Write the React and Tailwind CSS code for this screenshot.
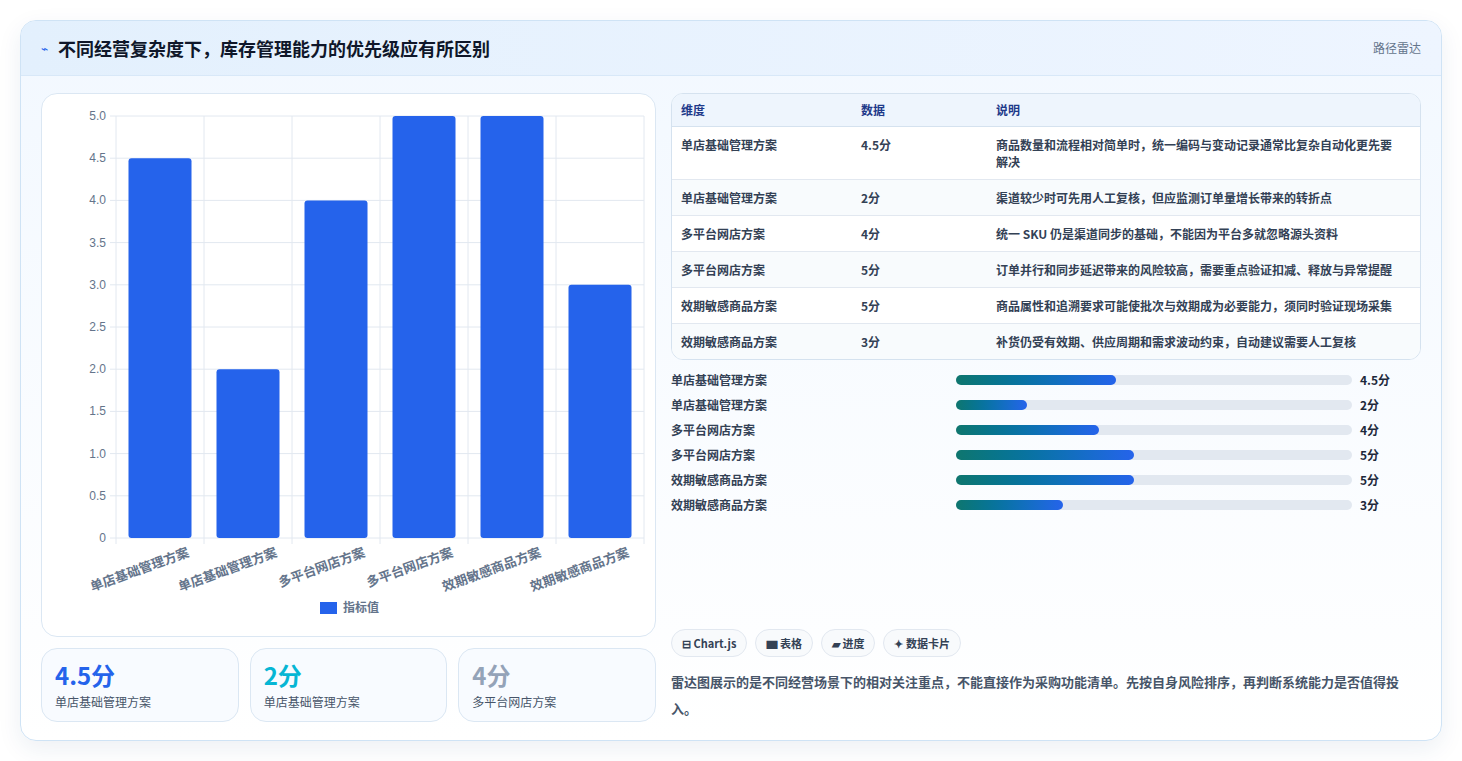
import React from 'react';

const rows = [
  { name: '单店基础管理方案', v: 4.5, note: '商品数量和流程相对简单时，统一编码与变动记录通常比复杂自动化更先要解决' },
  { name: '单店基础管理方案', v: 2, note: '渠道较少时可先用人工复核，但应监测订单量增长带来的转折点' },
  { name: '多平台网店方案', v: 4, note: '统一 SKU 仍是渠道同步的基础，不能因为平台多就忽略源头资料' },
  { name: '多平台网店方案', v: 5, note: '订单并行和同步延迟带来的风险较高，需要重点验证扣减、释放与异常提醒' },
  { name: '效期敏感商品方案', v: 5, note: '商品属性和追溯要求可能使批次与效期成为必要能力，须同时验证现场采集' },
  { name: '效期敏感商品方案', v: 3, note: '补货仍受有效期、供应周期和需求波动约束，自动建议需要人工复核' },
];

function BarChart() {
  const x0 = 74, x1 = 602, y0 = 22, y1 = 444;
  const step = (x1 - x0) / 6;
  const ticks = [0, 0.5, 1, 1.5, 2, 2.5, 3, 3.5, 4, 4.5, 5];
  const y = (v) => y1 - (v / 5) * (y1 - y0);
  return (
    <svg width="615" height="541" className="block" style={{ fontFamily: '"Liberation Sans","Noto Sans CJK SC",sans-serif' }}>
      {ticks.map((t) => (
        <g key={t}>
          <line x1={x0 - 6} x2={x1} y1={y(t)} y2={y(t)} stroke="#e2e8f0" />
          <text x={x0 - 10} y={y(t) + 4} textAnchor="end" fontSize="12" fill="#64748b">{t === 0 ? '0' : t.toFixed(1)}</text>
        </g>
      ))}
      {[0, 1, 2, 3, 4, 5, 6].map((i) => (
        <line key={i} x1={x0 + i * step} x2={x0 + i * step} y1={y0} y2={y1 + 6} stroke="#e2e8f0" />
      ))}
      {rows.map((r, i) => {
        const cx = x0 + step * i + step / 2;
        return (
          <g key={i}>
            <rect x={cx - 31.5} y={y(r.v)} width="63" height={y1 - y(r.v)} rx="3" fill="#2563eb" />
            <text transform={`translate(${cx + 30},${y1 + 18}) rotate(-20)`} textAnchor="end" fontSize="13" fontWeight="700" fill="#64748b">{r.name}</text>
          </g>
        );
      })}
      <rect x="278" y="508" width="17" height="12" fill="#2563eb" />
      <text x="301" y="518" fontSize="12" fontWeight="700" fill="#64748b">指标值</text>
    </svg>
  );
}

export default function App() {
  return (
    <div className="min-h-screen bg-white pt-5 px-5" style={{ fontFamily: '"Noto Sans CJK SC","Noto Sans",sans-serif' }}>
      <div className="w-[1422px] rounded-2xl border border-[#cfe3f5] overflow-hidden shadow-[0_8px_24px_rgba(30,64,120,0.08)] bg-gradient-to-b from-[#f2f8ff] to-white">
        <div className="h-[55px] flex items-center justify-between px-5 bg-gradient-to-r from-[#e3f0fd] to-[#eef5ff] border-b border-[#d8e8f8]">
          <div className="flex items-center gap-2.5">
            <span className="text-[#2563eb] text-xs">⌁</span>
            <h1 className="text-[18px] font-bold text-[#0f172a]">不同经营复杂度下，库存管理能力的优先级应有所区别</h1>
          </div>
          <span className="text-xs text-[#64748b]">路径雷达</span>
        </div>
        <div className="flex gap-[15px] px-5 pt-[17px] pb-[18px]">
          <div className="w-[615px] flex flex-col gap-[11px]">
            <div className="h-[544px] rounded-2xl border border-[#dbe7f3] bg-white">
              <BarChart />
            </div>
            <div className="grid grid-cols-3 gap-[11px]">
              {[['4.5分', 'text-[#2563eb]', '单店基础管理方案'], ['2分', 'text-[#06b6d4]', '单店基础管理方案'], ['4分', 'text-[#94a3b8]', '多平台网店方案']].map(([v, c, n], i) => (
                <div key={i} className="h-[74px] rounded-2xl border border-[#dbe7f3] bg-[#f8fbff] px-[13px] pt-[10px]">
                  <div className={`text-[24px] font-bold leading-[32px] ${c}`}>{v}</div>
                  <div className="text-xs text-[#475569] mt-[3px]">{n}</div>
                </div>
              ))}
            </div>
          </div>
          <div className="flex-1 flex flex-col">
            <div className="rounded-xl border border-[#d5e2ef] overflow-hidden bg-white text-xs">
              <div className="grid grid-cols-[180px_135px_1fr] h-[33px] items-center px-[9px] bg-[#eef5fd] border-b border-[#d5e2ef] text-[#1e3a8a] font-bold">
                <span>维度</span><span>数据</span><span>说明</span>
              </div>
              {rows.map((r, i) => (
                <div key={i} className={`grid grid-cols-[180px_135px_1fr] px-[9px] py-[9px] leading-[17px] font-semibold text-[#334155] ${i % 2 ? 'bg-[#f8fbfd]' : 'bg-white'} ${i < 5 ? 'border-b border-[#e2e8f0]' : ''}`}>
                  <span>{r.name}</span><span>{r.v}分</span><span className="pr-3">{r.note}</span>
                </div>
              ))}
            </div>
            <div className="mt-[7px] flex flex-col">
              {rows.map((r, i) => (
                <div key={i} className="h-[25px] flex items-center text-xs font-semibold text-[#334155]">
                  <span className="w-[285px]">{r.name}</span>
                  <div className="w-[396px] h-[10px] rounded-full bg-[#e2e8f0]">
                    <div className="h-full rounded-full bg-gradient-to-r from-[#0f766e] to-[#2563eb]" style={{ width: `${r.v * 9}%` }} />
                  </div>
                  <span className="ml-2 font-bold text-[#1e293b]">{r.v}分</span>
                </div>
              ))}
            </div>
            <div className="mt-auto flex gap-2">
              {['⊟ Chart.js', '▆ 表格', '▰ 进度', '✦ 数据卡片'].map((t) => (
                <span key={t} className="h-[28px] px-2.5 flex items-center rounded-full border border-[#e2e8f0] bg-[#f8fafc] text-[11px] font-bold text-[#334155]">{t}</span>
              ))}
            </div>
            <p className="mt-[11px] text-[13px] leading-[27px] font-semibold text-[#475569] pr-5">雷达图展示的是不同经营场景下的相对关注重点，不能直接作为采购功能清单。先按自身风险排序，再判断系统能力是否值得投入。</p>
          </div>
        </div>
      </div>
    </div>
  );
}
